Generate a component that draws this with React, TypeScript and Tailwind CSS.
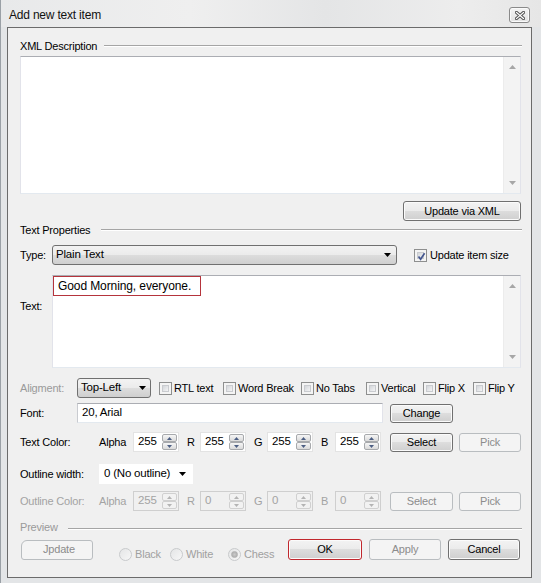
import React from "react";

function Tri({ up = false, color = "#000", w = 7, h = 4 }: { up?: boolean; color?: string; w?: number; h?: number }) {
  return (
    <svg width={w} height={h} viewBox={`0 0 ${w} ${h}`} className="block">
      {up ? <path d={`M0 ${h}H${w}L${w / 2} 0Z`} fill={color} /> : <path d={`M0 0H${w}L${w / 2} ${h}Z`} fill={color} />}
    </svg>
  );
}

function Btn({ children, className = "", disabled = false, red = false }: { children: React.ReactNode; className?: string; disabled?: boolean; red?: boolean }) {
  return (
    <div
      className={`flex items-center justify-center rounded-[3px] border ${
        red ? "border-[#c1272d]" : disabled ? "border-[#b9bdc0]" : "border-[#707070]"
      } ${
        disabled
          ? "bg-[#f4f4f4] text-[#8c8c8c]"
          : "bg-[linear-gradient(#f3f3f3_0%,#ebebeb_49%,#dddddd_50%,#cfcfcf_100%)] text-black shadow-[inset_0_0_0_1px_#fbfbfb]"
      } ${className}`}
    >
      {children}
    </div>
  );
}

function Check({ checked = false }: { checked?: boolean }) {
  return (
    <div className="w-[13px] h-[13px] shrink-0 border border-[#8e8f8f] bg-[#f4f4f4] p-[2px]">
      <div className="w-full h-full border border-[#c9cbcf] bg-[linear-gradient(135deg,#d3d6da,#f4f4f5)] relative">
        {checked && (
          <svg width="11" height="11" viewBox="0 0 11 11" className="absolute left-[-2px] top-[-2px]">
            <path d="M2.5 5.5 L4.6 8.2 L8.6 2.2" stroke="#44568f" strokeWidth="1.7" fill="none" />
          </svg>
        )}
      </div>
    </div>
  );
}

function Radio({ checked = false }: { checked?: boolean }) {
  return (
    <div className="w-[13px] h-[13px] shrink-0 rounded-full border border-[#c8cacc] bg-[linear-gradient(135deg,#e4e5e6,#f7f7f7)] flex items-center justify-center">
      {checked && <div className="w-[7px] h-[7px] rounded-full bg-[radial-gradient(circle,#c9c9c9,#a8a8a8)] border border-[#b0b0b0]" />}
    </div>
  );
}

function SpinBtn({ up = false, disabled = false }: { up?: boolean; disabled?: boolean }) {
  return (
    <div
      className={`h-[8px] flex items-center justify-center rounded-[2px] border ${
        disabled ? "border-[#d0d0d0] bg-[#f2f2f2]" : "border-[#a7a9ac] bg-[linear-gradient(#f6f6f6,#dadada)]"
      }`}
    >
      <Tri up={up} w={5} h={3} color={disabled ? "#b4b4b4" : "#4c5e83"} />
    </div>
  );
}

function Spin({ v, disabled = false }: { v: string; disabled?: boolean }) {
  return (
    <div
      className={`w-[46px] h-[20px] shrink-0 flex items-center border ${
        disabled ? "border-[#cfcfcf] bg-[#f0f0f0] text-[#a3a3a3]" : "border-[#e3e3e3] bg-white text-black"
      }`}
    >
      <span className="flex-1 pl-[4px] text-[11.5px]">{v}</span>
      <div className="flex flex-col justify-center w-[15px] mr-[1px]">
        <SpinBtn up disabled={disabled} />
        <SpinBtn disabled={disabled} />
      </div>
    </div>
  );
}

function ScrollBar({ upPad = "", downPad = "" }: { upPad?: string; downPad?: string }) {
  return (
    <div className="w-[17px] h-full shrink-0 bg-[#f3f3f3] border-l border-[#ececec] flex flex-col justify-between">
      <div className={`h-[20px] flex items-center justify-center ${upPad}`}>
        <Tri up w={7} h={4} color="#a6a6a6" />
      </div>
      <div className={`h-[20px] flex items-center justify-center ${downPad}`}>
        <Tri w={7} h={4} color="#a6a6a6" />
      </div>
    </div>
  );
}

function SectionLabel({ text, gap, gray = false }: { text: string; gap: string; gray?: boolean }) {
  return (
    <div className="flex items-center h-[14px]">
      <span className={gray ? "text-[#9a9a9a]" : "text-black"}>{text}</span>
      <div className={`flex-1 h-[2px] border-t border-[#a5a5a5] border-b border-b-white mr-[-1px] ${gap}`} />
    </div>
  );
}

export default function App() {
  return (
    <div className="w-[541px] h-[583px] overflow-hidden bg-[#e3e5e7] font-['Liberation_Sans',Arial,sans-serif] text-[11px] tracking-[-0.2px] leading-none text-black select-none border-l border-[#9aa0a6]">
      {/* Title bar */}
      <div className="h-[27px] flex items-center pl-[8px] pr-[11px] pt-[3px] bg-[linear-gradient(90deg,#e8e9ea,#efefef_35%,#e4e5e6_60%,#ededed_85%,#e6e6e6)]">
        <span className="flex-1 text-[12px] text-[#111]">Add new text item</span>
        <div className="w-[21px] h-[16px] rounded-[3px] border border-[#8a8a8a] bg-[linear-gradient(#f4f4f4,#e2e2e2)] flex items-center justify-center shadow-[inset_0_0_0_1px_#fafafa]">
          <svg width="10" height="9" viewBox="0 0 10 9">
            <path d="M1.5 1.5 L8.5 7.5 M8.5 1.5 L1.5 7.5" stroke="#555" strokeWidth="3.2" strokeLinecap="square" />
            <path d="M1.5 1.5 L8.5 7.5 M8.5 1.5 L1.5 7.5" stroke="#fff" strokeWidth="1.2" strokeLinecap="square" />
          </svg>
        </div>
      </div>

      {/* Client */}
      <div className="ml-[6px] w-[525px] h-[551px] border border-[#6b6b6b] bg-[#f0f0f0] pl-[12px] pr-[10px] pt-[11px] flex flex-col">
        <SectionLabel text="XML Description" gap="ml-[7px]" />

        <div className="mt-[3px] h-[138px] flex bg-white border border-[#e2e3ea] border-t-[#abadb3] border-b-[#e3e9ef]">
          <div className="flex-1" />
          <ScrollBar />
        </div>

        <Btn className="self-end mt-[7px] w-[118px] h-[20px]">Update via XML</Btn>

        <div className="mt-[2px]">
          <SectionLabel text="Text Properties" gap="ml-[11px]" />
        </div>

        {/* Type row */}
        <div className="mt-[8px] h-[20px] flex items-center">
          <span className="w-[32px] shrink-0">Type:</span>
          <div className="w-[345px] h-[20px] flex items-center rounded-[3px] border border-[#707070] bg-[linear-gradient(#f3f3f3_0%,#ebebeb_49%,#dddddd_50%,#cfcfcf_100%)] pl-[3px] pr-[5px]">
            <span className="flex-1 text-[11.5px]">Plain Text</span>
            <Tri />
          </div>
          <div className="ml-[17px]">
            <Check checked />
          </div>
          <span className="ml-[3px]">Update item size</span>
        </div>

        {/* Text area row */}
        <div className="mt-[10px] h-[93px] flex">
          <span className="w-[32px] shrink-0 pt-[26px]">Text:</span>
          <div className="flex-1 flex bg-white border border-[#e2e3ea] border-t-[#abadb3] border-b-[#e3e9ef]">
            <div className="flex-1 flex flex-col items-start">
              <div className="w-[148px] h-[20px] border border-[#b5343c] flex items-center pl-[4px] text-[12px] tracking-[-0.1px]">
                Good Morning, everyone.
              </div>
            </div>
            <ScrollBar />
          </div>
        </div>

        {/* Alignment row */}
        <div className="mt-[10px] h-[20px] flex items-center">
          <span className="w-[57px] shrink-0 text-[#9a9a9a]">Aligment:</span>
          <div className="w-[74px] h-[20px] flex items-center rounded-[3px] border border-[#707070] bg-[linear-gradient(#f3f3f3_0%,#ebebeb_49%,#dddddd_50%,#cfcfcf_100%)] pl-[3px] pr-[4px]">
            <span className="flex-1 text-[11.5px]">Top-Left</span>
            <Tri />
          </div>
          <div className="ml-[8px] w-[64px] flex items-center">
            <Check />
            <span className="ml-[2px]">RTL text</span>
          </div>
          <div className="w-[78px] flex items-center">
            <Check />
            <span className="ml-[2px]">Word Break</span>
          </div>
          <div className="w-[65px] flex items-center">
            <Check />
            <span className="ml-[2px]">No Tabs</span>
          </div>
          <div className="w-[57px] flex items-center">
            <Check />
            <span className="ml-[2px]">Vertical</span>
          </div>
          <div className="w-[50px] flex items-center">
            <Check />
            <span className="ml-[2px]">Flip X</span>
          </div>
          <div className="flex items-center">
            <Check />
            <span className="ml-[2px]">Flip Y</span>
          </div>
        </div>

        {/* Font row */}
        <div className="mt-[5px] h-[20px] flex items-center">
          <span className="w-[57px] shrink-0">Font:</span>
          <div className="w-[306px] h-[20px] flex items-center bg-white border border-[#e2e3ea] border-t-[#abadb3] border-l-[#c9cbd0] border-b-[#e3e9ef] pl-[4px] text-[11.5px]">
            20, Arial
          </div>
          <Btn className="ml-[7px] w-[63px] h-[19px]">Change</Btn>
        </div>

        {/* Text color row */}
        <div className="mt-[9px] h-[20px] flex items-center">
          <span className="w-[79px] shrink-0">Text Color:</span>
          <span className="w-[34px] shrink-0">Alpha</span>
          <Spin v="255" />
          <span className="w-[21px] shrink-0 pl-[8px]">R</span>
          <Spin v="255" />
          <span className="w-[21px] shrink-0 pl-[8px]">G</span>
          <Spin v="255" />
          <span className="w-[22px] shrink-0 pl-[8px]">B</span>
          <Spin v="255" />
          <Btn className="ml-[9px] w-[63px] h-[19px]">Select</Btn>
          <Btn disabled className="ml-[6px] w-[62px] h-[19px]">Pick</Btn>
        </div>

        {/* Outline width row */}
        <div className="mt-[12px] h-[20px] flex items-center">
          <span className="w-[79px] shrink-0">Outline width:</span>
          <div className="w-[94px] h-[20px] bg-white flex items-center pl-[5px] pr-[7px] text-[11.5px]">
            <span className="flex-1">0 (No outline)</span>
            <Tri />
          </div>
        </div>

        {/* Outline color row */}
        <div className="mt-[7px] h-[20px] flex items-center text-[#a3a3a3]">
          <span className="w-[79px] shrink-0">Outline Color:</span>
          <span className="w-[34px] shrink-0">Alpha</span>
          <Spin v="255" disabled />
          <span className="w-[21px] shrink-0 pl-[8px]">R</span>
          <Spin v="0" disabled />
          <span className="w-[21px] shrink-0 pl-[8px]">G</span>
          <Spin v="0" disabled />
          <span className="w-[22px] shrink-0 pl-[8px]">B</span>
          <Spin v="0" disabled />
          <Btn disabled className="ml-[9px] w-[63px] h-[19px]">Select</Btn>
          <Btn disabled className="ml-[6px] w-[62px] h-[19px]">Pick</Btn>
        </div>

        {/* Preview */}
        <div className="mt-[9px] h-[14px] flex items-center">
          <span className="text-[#9a9a9a]">Preview</span>
          <div className="flex-1 h-[2px] mt-[4px] border-t border-[#a5a5a5] border-b border-b-white ml-[10px] mr-[-1px]" />
        </div>

        {/* Bottom row */}
        <div className="mt-[5px] h-[21px] flex items-center">
          <Btn disabled className="ml-[1px] w-[72px] h-[20px] !justify-start pl-[21px] rounded-tl-[6px]">Jpdate</Btn>
          <div className="w-[26px] shrink-0" />
          <div className="w-[51px] flex items-center text-[#a0a0a0] pt-[9px]">
            <Radio />
            <span className="ml-[3px]">Black</span>
          </div>
          <div className="w-[58px] flex items-center text-[#a0a0a0] pt-[9px]">
            <Radio />
            <span className="ml-[3px]">White</span>
          </div>
          <div className="w-[60px] flex items-center text-[#a0a0a0] pt-[9px]">
            <Radio checked />
            <span className="ml-[3px]">Chess</span>
          </div>
          <Btn red className="w-[74px] h-[21px]">OK</Btn>
          <Btn disabled className="ml-[7px] w-[72px] h-[21px]">Apply</Btn>
          <Btn className="ml-[7px] w-[72px] h-[21px]">Cancel</Btn>
        </div>
      </div>
    </div>
  );
}
